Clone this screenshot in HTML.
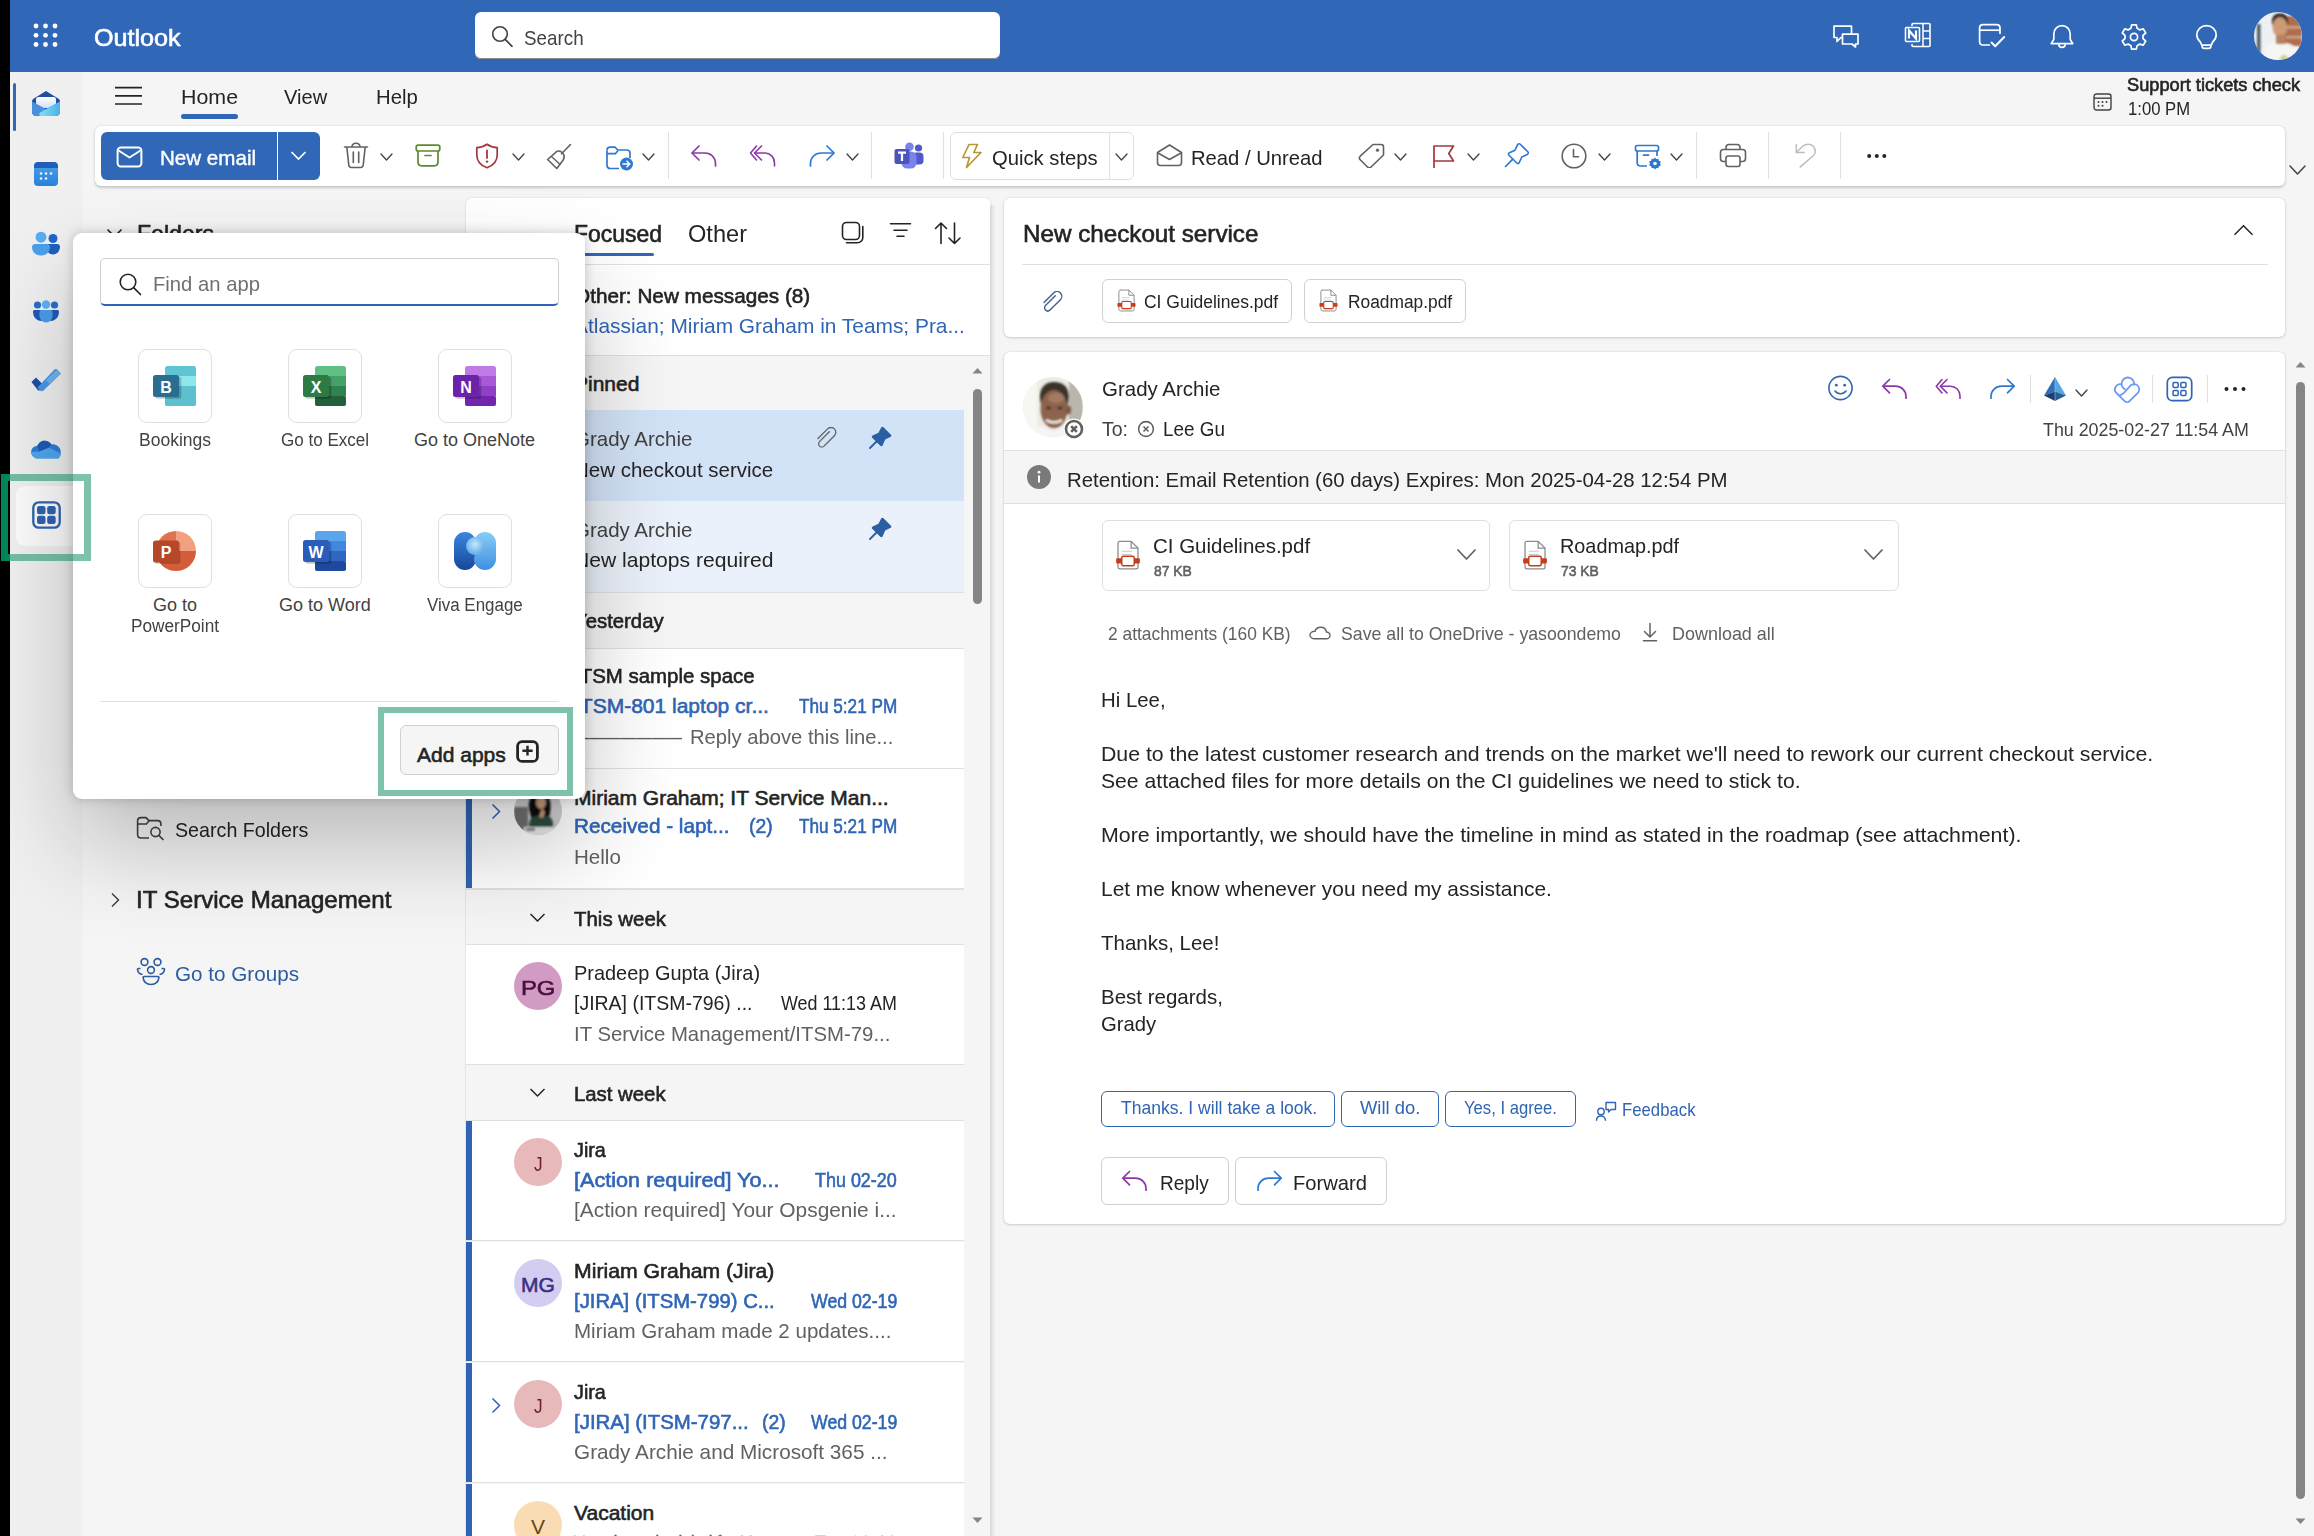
<!DOCTYPE html><html><head><meta charset="utf-8"><style>
html,body{margin:0;padding:0}
body{width:2314px;height:1536px;overflow:hidden;position:relative;background:#f5f5f5;font-family:"Liberation Sans",sans-serif}
.a{position:absolute;display:block}
.t{position:absolute;white-space:nowrap}
</style></head><body>
<div class="a" style="left:0px;top:0px;width:10px;height:1536px;background:#000"></div>
<div class="a" style="left:10px;top:0px;width:2304px;height:72px;background:#3068b7"></div>
<div class="a" style="left:10px;top:72px;width:73px;height:1464px;background:#f0f0f0"></div>
<svg class="a" style="left:0px;top:0px;" width="70" height="72" viewBox="0 0 70 72" fill="none"><circle cx="36" cy="26" r="2.4" fill="#fff"/><circle cx="36" cy="35.3" r="2.4" fill="#fff"/><circle cx="36" cy="44.5" r="2.4" fill="#fff"/><circle cx="45.5" cy="26" r="2.4" fill="#fff"/><circle cx="45.5" cy="35.3" r="2.4" fill="#fff"/><circle cx="45.5" cy="44.5" r="2.4" fill="#fff"/><circle cx="55" cy="26" r="2.4" fill="#fff"/><circle cx="55" cy="35.3" r="2.4" fill="#fff"/><circle cx="55" cy="44.5" r="2.4" fill="#fff"/></svg>
<div class="t" style="left:94.00px;top:26px;font-size:24px;line-height:24px;color:#fff;-webkit-text-stroke:0.6px #fff;transform:scaleX(1.0476);transform-origin:0 0;">Outlook</div>
<div class="a" style="left:475px;top:12px;width:525px;height:47px;background:#fff;border-radius:6px;box-shadow:inset 0 -1px 0 #8a8a8a"></div>
<svg class="a" style="left:490px;top:25px;" width="24" height="22" viewBox="0 0 24 22" fill="none"><circle cx="10" cy="9" r="7.3" stroke="#424242" stroke-width="1.6"/><path d="M15.2 14.4L22 21.3" stroke="#424242" stroke-width="1.7" stroke-linecap="round"/></svg>
<div class="t" style="left:524.00px;top:27px;font-size:21px;line-height:21px;color:#424242;transform:scaleX(0.8955);transform-origin:0 0;">Search</div>
<svg class="a" style="left:114px;top:84px;" width="29" height="24" viewBox="0 0 29 24" fill="none"><path d="M1 3.6H28M1 11.9H28M1 20H28" stroke="#242424" stroke-width="1.6"/></svg>
<div class="t" style="left:181.00px;top:86px;font-size:21px;line-height:21px;color:#242424;transform:scaleX(1.0179);transform-origin:0 0;">Home</div>
<div class="a" style="left:181px;top:114px;width:57px;height:5px;background:#3068b7;border-radius:3px"></div>
<div class="t" style="left:284.00px;top:86px;font-size:21px;line-height:21px;color:#242424;transform:scaleX(0.9565);transform-origin:0 0;">View</div>
<div class="t" style="left:376.00px;top:86px;font-size:21px;line-height:21px;color:#242424;transform:scaleX(0.9674);transform-origin:0 0;">Help</div>
<div class="t" style="left:2127.00px;top:76px;font-size:18px;line-height:18px;color:#242424;-webkit-text-stroke:0.6px #242424;transform:scaleX(1.0116);transform-origin:0 0;">Support tickets check</div>
<div class="t" style="left:2128.00px;top:100px;font-size:18px;line-height:18px;color:#242424;transform:scaleX(0.9254);transform-origin:0 0;">1:00 PM</div>
<div class="a" style="left:95px;top:126px;width:2190px;height:60px;background:#fff;border-radius:6px;box-shadow:0 1.5px 3px rgba(0,0,0,.18),0 0 2px rgba(0,0,0,.10)"></div>
<div class="a" style="left:101px;top:132px;width:219px;height:48px;background:#3068b7;border-radius:6px"></div>
<div class="a" style="left:277px;top:132px;width:1px;height:48px;background:#fff"></div>
<svg class="a" style="left:116px;top:146px;" width="27" height="22" viewBox="0 0 27 22" fill="none"><rect x="1.6" y="1.6" width="23.8" height="18.8" rx="3.2" stroke="#fff" stroke-width="2"/><path d="M2.5 4.5L13.5 11.5L24.5 4.5" stroke="#fff" stroke-width="2" stroke-linejoin="round"/></svg>
<div class="t" style="left:160.00px;top:147px;font-size:21px;line-height:21px;color:#fff;transform:scaleX(0.9796);transform-origin:0 0;-webkit-text-stroke:0.4px #fff;">New email</div>
<svg class="a" style="left:290px;top:150px;" width="17" height="11" viewBox="0 0 17 11" fill="none"><path d="M1.5 2L8.5 9L15.5 2" stroke="#fff" stroke-width="1.7"/></svg>
<svg class="a" style="left:343px;top:142px;" width="26" height="27" viewBox="0 0 26 27" fill="none"><path d="M1.5 5H24.5" stroke="#616161" stroke-width="1.6" stroke-linecap="round"/><path d="M9 5C9 2.8 10.6 1.3 13 1.3S17 2.8 17 5" stroke="#616161" stroke-width="1.6"/><path d="M3.8 5L5.8 23.2C6 24.6 7 25.5 8.4 25.5H17.6C19 25.5 20 24.6 20.2 23.2L22.2 5" stroke="#616161" stroke-width="1.6"/><path d="M10.3 10V20.5M15.7 10V20.5" stroke="#616161" stroke-width="1.6" stroke-linecap="round"/></svg>
<svg class="a" style="left:380px;top:153px;" width="13" height="8" viewBox="0 0 13 8" fill="none"><path d="M1 1L6.5 7L12 1" stroke="#424242" stroke-width="1.3" stroke-linejoin="round" stroke-linecap="round"/></svg>
<svg class="a" style="left:415px;top:144px;" width="26" height="23" viewBox="0 0 26 23" fill="none"><rect x="1.2" y="1.2" width="23.6" height="5.8" rx="2" stroke="#5c8a2a" stroke-width="1.7"/><path d="M3 7V18C3 20.2 4.6 21.8 6.8 21.8H19.2C21.4 21.8 23 20.2 23 18V7" stroke="#5c8a2a" stroke-width="1.7"/><path d="M10 11.5H16" stroke="#5c8a2a" stroke-width="1.7" stroke-linecap="round"/></svg>
<svg class="a" style="left:475px;top:143px;" width="24" height="26" viewBox="0 0 24 26" fill="none"><path d="M12 1.3C9 3.5 5.6 4.6 1.8 4.6V12C1.8 18.2 5.4 22.4 12 24.8C18.6 22.4 22.2 18.2 22.2 12V4.6C18.4 4.6 15 3.5 12 1.3Z" stroke="#a4373a" stroke-width="1.7" stroke-linejoin="round"/><path d="M12 7.5V15" stroke="#a4373a" stroke-width="1.8" stroke-linecap="round"/><circle cx="12" cy="18.6" r="1.2" fill="#a4373a"/></svg>
<svg class="a" style="left:512px;top:153px;" width="13" height="8" viewBox="0 0 13 8" fill="none"><path d="M1 1L6.5 7L12 1" stroke="#424242" stroke-width="1.3" stroke-linejoin="round" stroke-linecap="round"/></svg>
<svg class="a" style="left:546px;top:143px;" width="26" height="27" viewBox="0 0 26 27" fill="none"><path d="M15.5 10.8L24.5 1.5" stroke="#616161" stroke-width="1.6" stroke-linecap="round"/><path d="M11.2 8.2C13.5 7.6 16.2 9 17.5 11.2C18.6 13.2 18.2 15.5 17 17.3L10.8 25.5L1.6 16.5L9.2 9.8C9.8 9.1 10.5 8.5 11.2 8.2Z" stroke="#616161" stroke-width="1.6" stroke-linejoin="round"/><path d="M5.2 13.2L14.5 21.8" stroke="#616161" stroke-width="1.4"/></svg>
<svg class="a" style="left:605px;top:145px;" width="29" height="26" viewBox="0 0 29 26" fill="none"><path d="M2 5.5C2 3.6 3.4 2.2 5.3 2.2H10L12.8 5H21.7C23.6 5 25 6.4 25 8.3V13" stroke="#2f78d0" stroke-width="1.7" stroke-linejoin="round"/><path d="M2 5.5V20.2C2 22.1 3.4 23.5 5.3 23.5H14" stroke="#2f78d0" stroke-width="1.7"/><path d="M2 8.6H10.5L13 5.6" stroke="#2f78d0" stroke-width="1.6"/><circle cx="21.5" cy="19" r="6.5" fill="#2f78d0"/><path d="M18 19H24.6M22 16.2L24.8 19L22 21.8" stroke="#fff" stroke-width="1.6" stroke-linecap="round" stroke-linejoin="round"/></svg>
<svg class="a" style="left:642px;top:153px;" width="13" height="8" viewBox="0 0 13 8" fill="none"><path d="M1 1L6.5 7L12 1" stroke="#424242" stroke-width="1.3" stroke-linejoin="round" stroke-linecap="round"/></svg>
<div class="a" style="left:668px;top:132px;width:1px;height:47px;background:#e0e0e0"></div>
<svg class="a" style="left:690px;top:144px;" width="28" height="23" viewBox="0 0 28 23" fill="none"><path d="M9 2L2 9L9 16" stroke="#8b38a8" stroke-width="1.7" stroke-linecap="round" stroke-linejoin="round"/><path d="M2.5 9H15C20.8 9 25.5 13.5 25.5 19.5V22" stroke="#8b38a8" stroke-width="1.7" stroke-linecap="round"/></svg>
<svg class="a" style="left:749px;top:144px;" width="28" height="23" viewBox="0 0 28 23" fill="none"><path d="M7.5 2L1.5 9L7.5 16" stroke="#8b38a8" stroke-width="1.6" stroke-linecap="round" stroke-linejoin="round"/><path d="M12.5 2L5.5 9L12.5 16" stroke="#8b38a8" stroke-width="1.6" stroke-linecap="round" stroke-linejoin="round"/><path d="M6 9H16C21.2 9 25.5 13.3 25.5 19V22" stroke="#8b38a8" stroke-width="1.6" stroke-linecap="round"/></svg>
<svg class="a" style="left:808px;top:144px;" width="28" height="23" viewBox="0 0 28 23" fill="none"><path d="M19 2L26 9L19 16" stroke="#2f78d0" stroke-width="1.7" stroke-linecap="round" stroke-linejoin="round"/><path d="M25.5 9H13C7.2 9 2.5 13.5 2.5 19.5V22" stroke="#2f78d0" stroke-width="1.7" stroke-linecap="round"/></svg>
<svg class="a" style="left:846px;top:153px;" width="13" height="8" viewBox="0 0 13 8" fill="none"><path d="M1 1L6.5 7L12 1" stroke="#424242" stroke-width="1.3" stroke-linejoin="round" stroke-linecap="round"/></svg>
<div class="a" style="left:871px;top:132px;width:1px;height:47px;background:#e0e0e0"></div>
<svg class="a" style="left:894px;top:142px;" width="30" height="27" viewBox="0 0 30 27" fill="none"><circle cx="24.5" cy="6" r="3.6" fill="#5059c9"/><rect x="18.5" y="10.5" width="11" height="12" rx="4" fill="#5059c9"/><circle cx="15.5" cy="4.8" r="4.3" fill="#7b83eb"/><rect x="7.5" y="9.5" width="15" height="17" rx="5.5" fill="#7b83eb"/><rect x="0.5" y="7" width="15" height="15" rx="2" fill="#4b53bc"/><path d="M4 10.7H12M8 10.7V19" stroke="#fff" stroke-width="2.2"/></svg>
<div class="a" style="left:943px;top:132px;width:1px;height:47px;background:#e0e0e0"></div>
<div class="a" style="left:950px;top:132px;width:184px;height:48px;border:1px solid #e0e0e0;border-radius:6px;box-sizing:border-box"></div>
<div class="a" style="left:1109px;top:133px;width:1px;height:46px;background:#e0e0e0"></div>
<svg class="a" style="left:960px;top:143px;" width="23" height="26" viewBox="0 0 23 26" fill="none"><path d="M9 1.5H17.5L13.8 9.5H21L6.5 24.5L9.5 14.5H2.8L9 1.5Z" stroke="#b8963a" stroke-width="1.7" stroke-linejoin="round"/></svg>
<div class="t" style="left:992.00px;top:147px;font-size:21px;line-height:21px;color:#242424;transform:scaleX(0.9636);transform-origin:0 0;">Quick steps</div>
<svg class="a" style="left:1115px;top:153px;" width="13" height="8" viewBox="0 0 13 8" fill="none"><path d="M1 1L6.5 7L12 1" stroke="#424242" stroke-width="1.3" stroke-linejoin="round" stroke-linecap="round"/></svg>
<svg class="a" style="left:1156px;top:143px;" width="27" height="24" viewBox="0 0 27 24" fill="none"><path d="M1.5 9.5L13.5 2L25.5 9.5V19.5C25.5 21.2 24.2 22.5 22.5 22.5H4.5C2.8 22.5 1.5 21.2 1.5 19.5V9.5Z" stroke="#616161" stroke-width="1.6" stroke-linejoin="round"/><path d="M2 10L13.5 16.5L25 10" stroke="#616161" stroke-width="1.6" stroke-linejoin="round"/></svg>
<div class="t" style="left:1191.00px;top:147px;font-size:21px;line-height:21px;color:#242424;transform:scaleX(0.9635);transform-origin:0 0;">Read / Unread</div>
<svg class="a" style="left:1358px;top:143px;" width="27" height="25" viewBox="0 0 27 25" fill="none"><path d="M15 1.5H23.2C24.5 1.5 25.5 2.5 25.5 3.8V12L13 24C12 25 10.5 25 9.5 24L2.2 16.7C1.2 15.7 1.2 14.2 2.2 13.2Z" stroke="#616161" stroke-width="1.6" stroke-linejoin="round"/><circle cx="19.5" cy="7.2" r="1.6" fill="#616161"/></svg>
<svg class="a" style="left:1394px;top:153px;" width="13" height="8" viewBox="0 0 13 8" fill="none"><path d="M1 1L6.5 7L12 1" stroke="#424242" stroke-width="1.3" stroke-linejoin="round" stroke-linecap="round"/></svg>
<svg class="a" style="left:1432px;top:144px;" width="24" height="25" viewBox="0 0 24 25" fill="none"><path d="M2 24V2H21.5L16.8 9.5L21.5 17H2" stroke="#a4373a" stroke-width="1.7" stroke-linejoin="round"/></svg>
<svg class="a" style="left:1467px;top:153px;" width="13" height="8" viewBox="0 0 13 8" fill="none"><path d="M1 1L6.5 7L12 1" stroke="#424242" stroke-width="1.3" stroke-linejoin="round" stroke-linecap="round"/></svg>
<svg class="a" style="left:1504px;top:142px;" width="26" height="26" viewBox="0 0 26 26" fill="none"><path d="M1.5 24.5L8.8 17.2" stroke="#2f78d0" stroke-width="1.7" stroke-linecap="round"/><path d="M16.2 2.2L23.8 9.8C24.6 10.6 24.4 11.9 23.4 12.4L17.8 15L15.2 20.6C14.8 21.6 13.5 21.8 12.7 21L5 13.3C4.2 12.5 4.4 11.2 5.4 10.8L11 8.2L13.6 2.6C14.1 1.6 15.4 1.4 16.2 2.2Z" stroke="#2f78d0" stroke-width="1.6" stroke-linejoin="round"/></svg>
<svg class="a" style="left:1561px;top:143px;" width="28" height="26" viewBox="0 0 28 26" fill="none"><circle cx="13" cy="13" r="11.8" stroke="#616161" stroke-width="1.6"/><path d="M12.5 6.5V13.8H17.5" stroke="#616161" stroke-width="1.6" stroke-linecap="round" stroke-linejoin="round"/></svg>
<svg class="a" style="left:1598px;top:153px;" width="13" height="8" viewBox="0 0 13 8" fill="none"><path d="M1 1L6.5 7L12 1" stroke="#424242" stroke-width="1.3" stroke-linejoin="round" stroke-linecap="round"/></svg>
<svg class="a" style="left:1634px;top:144px;" width="29" height="26" viewBox="0 0 29 26" fill="none"><rect x="1.5" y="1.5" width="23" height="5.5" rx="2" stroke="#2f78d0" stroke-width="1.7"/><path d="M3.2 7V18.5C3.2 20.5 4.7 22 6.7 22H13" stroke="#2f78d0" stroke-width="1.7"/><path d="M23 7V12" stroke="#2f78d0" stroke-width="1.7"/><path d="M9.5 11.2H14.5" stroke="#2f78d0" stroke-width="1.7" stroke-linecap="round"/><path d="M21 13.5l1.3 1.6 2-.4.6 2 1.9.9-.7 1.9.7 1.9-1.9.9-.6 2-2-.4L21 25.5l-1.3-1.6-2 .4-.6-2-1.9-.9.7-1.9-.7-1.9 1.9-.9.6-2 2 .4Z" fill="#2f78d0"/><circle cx="21" cy="19.5" r="1.8" fill="#fff"/></svg>
<svg class="a" style="left:1670px;top:153px;" width="13" height="8" viewBox="0 0 13 8" fill="none"><path d="M1 1L6.5 7L12 1" stroke="#424242" stroke-width="1.3" stroke-linejoin="round" stroke-linecap="round"/></svg>
<div class="a" style="left:1696px;top:132px;width:1px;height:47px;background:#e0e0e0"></div>
<svg class="a" style="left:1719px;top:143px;" width="28" height="25" viewBox="0 0 28 25" fill="none"><path d="M7 6.5V4.5C7 2.8 8.3 1.5 10 1.5H18C19.7 1.5 21 2.8 21 4.5V6.5" stroke="#616161" stroke-width="1.6"/><path d="M7 18.5H4.5C2.8 18.5 1.5 17.2 1.5 15.5V9.5C1.5 7.8 2.8 6.5 4.5 6.5H23.5C25.2 6.5 26.5 7.8 26.5 9.5V15.5C26.5 17.2 25.2 18.5 23.5 18.5H21" stroke="#616161" stroke-width="1.6"/><rect x="7" y="13" width="14" height="10.5" rx="2.2" stroke="#616161" stroke-width="1.6"/></svg>
<div class="a" style="left:1768px;top:132px;width:1px;height:47px;background:#e0e0e0"></div>
<svg class="a" style="left:1794px;top:142px;" width="23" height="27" viewBox="0 0 23 27" fill="none"><path d="M2.3 2V10.4H10.8" stroke="#bdbdbd" stroke-width="1.5"/><path d="M2.8 10L9 4C12 1.5 17 1.5 19.5 4.5C22 7.5 21.8 11.5 19 14L5.7 25.4" stroke="#bdbdbd" stroke-width="1.5"/></svg>
<div class="a" style="left:1840px;top:132px;width:1px;height:47px;background:#e0e0e0"></div>
<svg class="a" style="left:1865px;top:152px;" width="24" height="8" viewBox="0 0 24 8" fill="none"><circle cx="4.2" cy="4" r="2" fill="#242424"/><circle cx="11.8" cy="4" r="2" fill="#242424"/><circle cx="19.3" cy="4" r="2" fill="#242424"/></svg>
<svg class="a" style="left:2289px;top:165px;" width="17" height="10" viewBox="0 0 17 10" fill="none"><path d="M1 1L8.5 9L16 1" stroke="#424242" stroke-width="1.5" stroke-linejoin="round" stroke-linecap="round"/></svg>
<svg class="a" style="left:2093px;top:93px;" width="19" height="18" viewBox="0 0 19 18" fill="none"><rect x="1" y="1" width="17" height="16" rx="2.5" stroke="#424242" stroke-width="1.4"/><path d="M1 5.2H18" stroke="#424242" stroke-width="1.4"/><g fill="#424242"><circle cx="5.5" cy="9" r="1"/><circle cx="9.5" cy="9" r="1"/><circle cx="13.5" cy="9" r="1"/><circle cx="5.5" cy="12.8" r="1"/><circle cx="9.5" cy="12.8" r="1"/></g></svg>
<svg class="a" style="left:1832px;top:24px;" width="28" height="24" viewBox="0 0 28 24" fill="none"><path d="M2 2.2H19.5V13.5H9L5 17.5V13.5H2Z" stroke="#fff" stroke-width="1.7" stroke-linejoin="round"/><path d="M10.5 10.2H26V20H23.5V23L20 20H10.5Z" fill="#3068b7" stroke="#fff" stroke-width="1.7" stroke-linejoin="round"/></svg>
<svg class="a" style="left:1904px;top:22px;" width="28" height="26" viewBox="0 0 28 26" fill="none"><path d="M8 4V2.5C8 1.9 8.4 1.5 9 1.5H25C25.6 1.5 26 1.9 26 2.5V23.5C26 24.1 25.6 24.5 25 24.5H9C8.4 24.5 8 24.1 8 23.5V22" stroke="#fff" stroke-width="1.6"/><path d="M19 1.5V24.5M19 9H26M19 16.5H26" stroke="#fff" stroke-width="1.5"/><rect x="1.5" y="5.5" width="14" height="14" rx="1" fill="#3068b7" stroke="#fff" stroke-width="1.6"/><path d="M5 16.5V8.5L12 16.5V8.5" stroke="#fff" stroke-width="2.2" stroke-linejoin="miter"/></svg>
<svg class="a" style="left:1978px;top:23px;" width="28" height="26" viewBox="0 0 28 26" fill="none"><path d="M12 22H5C3.1 22 1.6 20.5 1.6 18.6V5C1.6 3.1 3.1 1.6 5 1.6H18.6C20.5 1.6 22 3.1 22 5V11" stroke="#fff" stroke-width="1.7"/><path d="M1.6 7.2H22" stroke="#fff" stroke-width="1.7"/><path d="M13.5 19.5L17.2 23.2L26.2 14" stroke="#fff" stroke-width="2" stroke-linecap="round" stroke-linejoin="round"/></svg>
<svg class="a" style="left:2049px;top:24px;" width="26" height="25" viewBox="0 0 26 25" fill="none"><path d="M13 1.6C8.2 1.6 4.8 5.3 4.8 10V15.5L2.2 19.6H23.8L21.2 15.5V10C21.2 5.3 17.8 1.6 13 1.6Z" stroke="#fff" stroke-width="1.7" stroke-linejoin="round"/><path d="M9.8 20.2C9.8 22.2 11.2 23.4 13 23.4S16.2 22.2 16.2 20.2" stroke="#fff" stroke-width="1.7"/></svg>
<svg class="a" style="left:2120px;top:23px;" width="28" height="28" viewBox="0 0 28 28" fill="none"><path d="M11.6 1.8H16.4L17.1 5.3L19.9 6.9L23.3 5.8L25.7 10L23 12.4V15.6L25.7 18L23.3 22.2L19.9 21.1L17.1 22.7L16.4 26.2H11.6L10.9 22.7L8.1 21.1L4.7 22.2L2.3 18L5 15.6V12.4L2.3 10L4.7 5.8L8.1 6.9L10.9 5.3Z" stroke="#fff" stroke-width="1.7" stroke-linejoin="round"/><circle cx="14" cy="14" r="3.6" stroke="#fff" stroke-width="1.7"/></svg>
<svg class="a" style="left:2195px;top:24px;" width="23" height="26" viewBox="0 0 23 26" fill="none"><path d="M11.5 1.6C6 1.6 1.8 5.8 1.8 10.8C1.8 14 3.3 16.2 5.3 18L6.8 21.2H16.2L17.7 18C19.7 16.2 21.2 14 21.2 10.8C21.2 5.8 17 1.6 11.5 1.6Z" stroke="#fff" stroke-width="1.7" stroke-linejoin="round"/><path d="M7.2 21.2V22.5C7.2 23.6 8.1 24.4 9.2 24.4H13.8C14.9 24.4 15.8 23.6 15.8 22.5V21.2" stroke="#fff" stroke-width="1.7"/></svg>
<svg class="a" style="left:2254px;top:12px;" width="48" height="48" viewBox="0 0 48 48" fill="none"><defs><clipPath id="ca1"><circle cx="24" cy="24" r="24"/></clipPath><filter id="bl1"><feGaussianBlur stdDeviation=".8"/></filter></defs><g clip-path="url(#ca1)"><rect width="48" height="48" fill="#eef1f4"/><g filter="url(#bl1)"><rect x="30" y="4" width="18" height="30" fill="#b06c4c"/><rect x="32" y="14" width="16" height="2.5" fill="#c9a58c"/><rect x="32" y="24" width="16" height="2.5" fill="#c9a58c"/><rect x="3" y="12" width="3.5" height="36" fill="#4d5a5c"/><path d="M18 9C18 4 21 1.5 26 1.5S34 4 34 9V13H18Z" fill="#2a2220"/><ellipse cx="26" cy="15" rx="7.5" ry="10" fill="#cc9a74"/><rect x="22" y="23" width="9" height="9" fill="#b98160"/><path d="M8 48C8 38 14 32 20 31L26 34L33 31C40 33 46 38 46 48Z" fill="#f6f6f4"/><circle cx="30" cy="47" r="4" fill="#cfd28a"/></g></g></svg>
<div class="a" style="left:13px;top:83px;width:3px;height:48px;background:#3068b7;border-radius:2px"></div>
<svg class="a" style="left:31px;top:90px;" width="30" height="27" viewBox="0 0 30 27" fill="none"><defs><linearGradient id="mg1" x1="0" y1="0" x2="1" y2="0"><stop offset="0" stop-color="#7fe3f7"/><stop offset="1" stop-color="#4fb0e4"/></linearGradient><linearGradient id="mg2" x1="0" y1="0" x2="0" y2="1"><stop offset="0" stop-color="#fff"/><stop offset="1" stop-color="#cfe0f5"/></linearGradient></defs><path d="M15 1L27.5 8.7C28.4 9.3 29 10.3 29 11.4V22C29 24.2 27.2 26 25 26H5C2.8 26 1 24.2 1 22V11.4C1 10.3 1.6 9.3 2.5 8.7Z" fill="#1e4fa0"/><rect x="5" y="7" width="20" height="11" rx="2.5" fill="url(#mg2)"/><path d="M1 11.5L15 19L29 11.5V22C29 24.2 27.2 26 25 26H5C2.8 26 1 24.2 1 22Z" fill="#4a90dc"/><path d="M29 11.5V22C29 24.2 27.2 26 25 26H10C8.2 26 7.5 23.5 9.2 22.5L29 11.5Z" fill="url(#mg1)"/></svg>
<svg class="a" style="left:33px;top:161px;" width="26" height="26" viewBox="0 0 26 26" fill="none"><defs><linearGradient id="cg" x1="0" y1="0" x2="0" y2="1"><stop offset="0" stop-color="#4aa3ea"/><stop offset="1" stop-color="#2b80d8"/></linearGradient></defs><rect x="1" y="1" width="24" height="24" rx="4" fill="url(#cg)"/><path d="M1 5C1 2.8 2.8 1 5 1H21C23.2 1 25 2.8 25 5V7H1Z" fill="#1f5fb8"/><g fill="#fff" opacity=".9"><circle cx="8" cy="12.5" r="1.3"/><circle cx="13" cy="12.5" r="1.3"/><circle cx="18" cy="12.5" r="1.3"/><circle cx="8" cy="17.5" r="1.3"/><circle cx="13" cy="17.5" r="1.3"/></g></svg>
<svg class="a" style="left:31px;top:231px;" width="30" height="25" viewBox="0 0 30 25" fill="none"><circle cx="22" cy="7.5" r="4.5" fill="#2166c9"/><path d="M15 15.5C15 14 16.2 13 17.7 13H26.3C27.8 13 29 14 29 15.5C29 20.5 25.5 23.5 22 23.5S15 20.5 15 15.5Z" fill="#1f5fbf"/><circle cx="10" cy="6.2" r="5.5" fill="#56aef0"/><path d="M1 16C1 14.2 2.4 13 4.2 13H15.8C17.6 13 19 14.2 19 16C19 21.2 15 24.5 10 24.5S1 21.2 1 16Z" fill="#4ba0ea"/></svg>
<svg class="a" style="left:32px;top:300px;" width="28" height="23" viewBox="0 0 28 23" fill="none"><circle cx="5.5" cy="5" r="3.6" fill="#2a6bd0"/><circle cx="22.5" cy="5" r="3.6" fill="#2a6bd0"/><path d="M1 11.5C1 10.5 1.8 10 2.8 10H9V16C9 18 9.5 19.6 10.5 20.8C5 21.5 1 17.5 1 11.5Z" fill="#2158b8"/><path d="M27 11.5C27 10.5 26.2 10 25.2 10H19V16C19 18 18.5 19.6 17.5 20.8C23 21.5 27 17.5 27 11.5Z" fill="#2158b8"/><circle cx="14" cy="4.5" r="4.2" fill="#5bb1f2"/><path d="M7.5 12C7.5 10.9 8.4 10 9.5 10H18.5C19.6 10 20.5 10.9 20.5 12V15.5C20.5 19.5 17.6 22.5 14 22.5S7.5 19.5 7.5 15.5Z" fill="#4a9de8"/></svg>
<svg class="a" style="left:30px;top:368px;" width="32" height="24" viewBox="0 0 32 24" fill="none"><path d="M1.5 14L6 9.5L13.5 17L11 21.5C10.3 22.7 8.7 22.9 7.7 21.9Z" fill="#1f4fa8"/><path d="M27 1.5L31 5.5L13.5 22.5C12.5 23.5 10.8 23.4 9.9 22.3L7.5 19.5L24.2 1.8C25 1 26.2 0.8 27 1.5Z" fill="#4b97e6"/><path d="M27 1.5L31 5.5L20 16.2L16 12.2Z" fill="#6db6f2"/></svg>
<svg class="a" style="left:30px;top:439px;" width="32" height="22" viewBox="0 0 32 22" fill="none"><path d="M12.5 2C16 1 19.5 2.5 21.2 5.3C25.5 4.8 29.5 7.2 30.5 11C31.3 14 30.5 17 28.5 19H8C4.2 19 1.2 16.5 1.2 13C1.2 9.5 4 7 7.5 6.8C8.5 4.4 10.3 2.6 12.5 2Z" fill="#2e7cd6"/><path d="M1.2 13C1.2 16.5 4.2 19.8 8 19.8H28.5C30 18.3 30.8 16.5 30.9 14.5L19 8.5L9 12.5Z" fill="#4da7ee"/><path d="M12.5 2C16 1 19.5 2.5 21.2 5.3L19 8.5L9 12.5L7.5 6.8C8.5 4.4 10.3 2.6 12.5 2Z" fill="#1e5bb5"/></svg>
<div class="a" style="left:16px;top:486px;width:74px;height:60px;background:#fcfcfc;border-radius:9px"></div>
<svg class="a" style="left:32px;top:501px;" width="29" height="28" viewBox="0 0 29 28" fill="none"><rect x="1.3" y="1.3" width="26.4" height="25.4" rx="5.5" stroke="#2f64b0" stroke-width="2.3"/><rect x="5" y="5" width="8.5" height="8.2" rx="2.2" fill="#2f64b0"/><rect x="15.2" y="5" width="8.5" height="8.2" rx="2.2" fill="#2f64b0"/><rect x="5" y="14.8" width="8.5" height="8.2" rx="2.2" fill="#2f64b0"/><rect x="15.2" y="14.8" width="8.5" height="8.2" rx="2.2" fill="#2f64b0"/></svg>
<svg class="a" style="left:106px;top:228px;" width="17" height="10" viewBox="0 0 17 10" fill="none"><path d="M1.5 1.5L8.5 8.5L15.5 1.5" stroke="#242424" stroke-width="1.6"/></svg>
<div class="t" style="left:137.00px;top:222px;font-size:24px;line-height:24px;color:#242424;-webkit-text-stroke:0.6px #242424;transform:scaleX(0.9625);transform-origin:0 0;">Folders</div>
<svg class="a" style="left:136px;top:816px;" width="30" height="25" viewBox="0 0 30 25" fill="none"><path d="M13 22H5C3.1 22 1.6 20.5 1.6 18.6V5C1.6 3.1 3.1 1.6 5 1.6H10L13 4.6H21.5C23.4 4.6 24.9 6.1 24.9 8V10" stroke="#424242" stroke-width="1.6" stroke-linejoin="round"/><path d="M1.6 8H10.5L13 4.8" stroke="#424242" stroke-width="1.5"/><circle cx="19.5" cy="16" r="4.6" stroke="#424242" stroke-width="1.6"/><path d="M22.8 19.4L27 23.5" stroke="#424242" stroke-width="1.7" stroke-linecap="round"/></svg>
<div class="t" style="left:175.00px;top:819px;font-size:21px;line-height:21px;color:#242424;transform:scaleX(0.9366);transform-origin:0 0;">Search Folders</div>
<svg class="a" style="left:110px;top:892px;" width="11" height="16" viewBox="0 0 11 16" fill="none"><path d="M2 1.5L8.5 8L2 14.5" stroke="#424242" stroke-width="1.5"/></svg>
<div class="t" style="left:136.00px;top:888px;font-size:24px;line-height:24px;color:#242424;-webkit-text-stroke:0.6px #242424;transform:scaleX(1.0039);transform-origin:0 0;">IT Service Management</div>
<svg class="a" style="left:136px;top:957px;" width="30" height="29" viewBox="0 0 30 29" fill="none"><g stroke="#2a5ca0" stroke-width="1.6"><circle cx="8.5" cy="5" r="3.4"/><circle cx="21.5" cy="5" r="3.4"/><circle cx="15" cy="13" r="3.4"/><path d="M4.5 11.5H2.6C1.9 11.5 1.4 12 1.5 12.7C1.9 15.3 3.6 17.2 6.5 17.5"/><path d="M25.5 11.5H27.4C28.1 11.5 28.6 12 28.5 12.7C28.1 15.3 26.4 17.2 23.5 17.5"/><path d="M8.2 19.5H21.8C22.5 19.5 23 20 22.9 20.7C22.4 24.8 19.5 27.5 15 27.5S7.6 24.8 7.1 20.7C7 20 7.5 19.5 8.2 19.5Z"/></g></svg>
<div class="t" style="left:175.00px;top:963px;font-size:21px;line-height:21px;color:#2a5ca0;transform:scaleX(0.9841);transform-origin:0 0;">Go to Groups</div>
<div class="a" style="left:466px;top:198px;width:525px;height:1338px;background:#fff;border-radius:6px 6px 0 0;box-shadow:0 0 2px rgba(0,0,0,.12),0 1px 2px rgba(0,0,0,.10)"></div>
<div class="t" style="left:574.00px;top:222px;font-size:24px;line-height:24px;color:#242424;-webkit-text-stroke:0.6px #242424;transform:scaleX(0.9565);transform-origin:0 0;">Focused</div>
<div class="a" style="left:574px;top:253px;width:80px;height:3px;background:#3068b7;border-radius:2px"></div>
<div class="t" style="left:688.00px;top:222px;font-size:24px;line-height:24px;color:#242424;transform:scaleX(0.9833);transform-origin:0 0;">Other</div>
<svg class="a" style="left:841px;top:221px;" width="24" height="23" viewBox="0 0 24 23" fill="none"><rect x="1.5" y="1.5" width="17" height="17" rx="4" stroke="#242424" stroke-width="1.6"/><path d="M21.8 5.5V16.5C21.8 19.4 19.4 21.8 16.5 21.8H5.5" stroke="#242424" stroke-width="1.6" stroke-linecap="round"/></svg>
<svg class="a" style="left:889px;top:222px;" width="23" height="16" viewBox="0 0 23 16" fill="none"><path d="M1.5 1.8H21.5M5 8.2H18M8 14.2H15" stroke="#242424" stroke-width="1.6" stroke-linecap="round"/></svg>
<svg class="a" style="left:934px;top:221px;" width="29" height="24" viewBox="0 0 29 24" fill="none"><path d="M7 22.5V2M1.5 7.5L7 2L12.5 7.5M20.5 2V22.5M15 17L20.5 22.5L26 17" stroke="#242424" stroke-width="1.6" stroke-linecap="round" stroke-linejoin="round"/></svg>
<div class="a" style="left:466px;top:264px;width:525px;height:1px;background:#e0e0e0"></div>
<div class="t" style="left:574.00px;top:285px;font-size:21px;line-height:21px;color:#242424;-webkit-text-stroke:0.6px #242424;transform:scaleX(0.9874);transform-origin:0 0;">Other: New messages (8)</div>
<div class="t" style="left:574.00px;top:315px;font-size:21px;line-height:21px;color:#2f65b5;transform:scaleX(0.9949);transform-origin:0 0;">Atlassian; Miriam Graham in Teams; Pra...</div>
<div class="a" style="left:466px;top:355px;width:525px;height:1px;background:#e0e0e0"></div>
<div class="a" style="left:466px;top:356px;width:524px;height:1180px;background:#f5f5f5"></div>
<div class="a" style="left:990px;top:205px;width:6px;height:1331px;background:linear-gradient(90deg,#d6d6d6,#e6e6e6 40%,rgba(240,240,240,0))"></div>
<div class="t" style="left:574.00px;top:373px;font-size:21px;line-height:21px;color:#242424;-webkit-text-stroke:0.6px #242424;transform:scaleX(1.0000);transform-origin:0 0;">Pinned</div>
<div class="a" style="left:466px;top:410px;width:498px;height:91px;background:#d3e3f7"></div>
<div class="t" style="left:574.00px;top:428px;font-size:21px;line-height:21px;color:#424242;transform:scaleX(0.9752);transform-origin:0 0;">Grady Archie</div>
<div class="t" style="left:574.00px;top:459px;font-size:21px;line-height:21px;color:#242424;transform:scaleX(0.9755);transform-origin:0 0;">New checkout service</div>
<svg class="a" style="left:817px;top:427px;" width="21" height="23" viewBox="0 0 21 23" fill="none"><path d="M1 11.5L10.6 1.9A4.8 4.8 0 0 1 17.4 8.7L7 19.1A3.18 3.18 0 0 1 2.5 14.6L12.3 4.8" stroke="#616161" stroke-width="1.3" stroke-linecap="round" stroke-linejoin="round"/></svg>
<svg class="a" style="left:869px;top:426px;" width="24" height="23" viewBox="0 0 24 23" fill="none"><path d="M1 22L7.5 15.5" stroke="#2c5ea3" stroke-width="1.8" stroke-linecap="round"/><path d="M14.5 1.2L22 8.7C22.6 9.3 22.5 10.3 21.7 10.7L16.2 13.5L13.6 19.4C13.2 20.3 12 20.5 11.3 19.8L3.2 11.7C2.5 11 2.7 9.8 3.6 9.4L9.5 6.8L12.3 1.3C12.7 0.5 13.9 0.5 14.5 1.2Z" fill="#2c5ea3"/></svg>
<div class="a" style="left:466px;top:501px;width:498px;height:91px;background:#ebf1fa"></div>
<div class="t" style="left:574.00px;top:519px;font-size:21px;line-height:21px;color:#424242;transform:scaleX(0.9752);transform-origin:0 0;">Grady Archie</div>
<div class="t" style="left:574.00px;top:549px;font-size:21px;line-height:21px;color:#242424;transform:scaleX(1.0051);transform-origin:0 0;">New laptops required</div>
<svg class="a" style="left:869px;top:517px;" width="24" height="23" viewBox="0 0 24 23" fill="none"><path d="M1 22L7.5 15.5" stroke="#2c5ea3" stroke-width="1.8" stroke-linecap="round"/><path d="M14.5 1.2L22 8.7C22.6 9.3 22.5 10.3 21.7 10.7L16.2 13.5L13.6 19.4C13.2 20.3 12 20.5 11.3 19.8L3.2 11.7C2.5 11 2.7 9.8 3.6 9.4L9.5 6.8L12.3 1.3C12.7 0.5 13.9 0.5 14.5 1.2Z" fill="#2c5ea3"/></svg>
<div class="a" style="left:466px;top:592px;width:498px;height:1px;background:#e0e0e0"></div>
<div class="t" style="left:574.00px;top:610px;font-size:21px;line-height:21px;color:#242424;-webkit-text-stroke:0.6px #242424;transform:scaleX(0.9677);transform-origin:0 0;">Yesterday</div>
<div class="a" style="left:466px;top:648px;width:498px;height:1px;background:#e0e0e0"></div>
<div class="a" style="left:466px;top:649px;width:498px;height:120px;background:#fff"></div>
<div class="a" style="left:466px;top:768px;width:498px;height:1px;background:#e0e0e0"></div>
<div class="a" style="left:466px;top:649px;width:6px;height:119px;background:#2f64b4"></div>
<div class="t" style="left:574.00px;top:665px;font-size:21px;line-height:21px;color:#242424;-webkit-text-stroke:0.6px #242424;transform:scaleX(0.9731);transform-origin:0 0;">ITSM sample space</div>
<div class="t" style="left:574.00px;top:695px;font-size:21px;line-height:21px;color:#2f65b5;-webkit-text-stroke:0.6px #2f65b5;transform:scaleX(1.0000);transform-origin:0 0;">ITSM-801 laptop cr...</div>
<div class="t" style="left:799.00px;top:695px;font-size:21px;line-height:21px;color:#2f65b5;-webkit-text-stroke:0.6px #2f65b5;transform:scaleX(0.8167);transform-origin:0 0;">Thu 5:21 PM</div>
<div class="t" style="left:574.00px;top:726px;font-size:21px;line-height:21px;color:#616161;transform:scaleX(0.7347);transform-origin:0 0;">———————</div>
<div class="t" style="left:690.00px;top:726px;font-size:21px;line-height:21px;color:#616161;transform:scaleX(0.9621);transform-origin:0 0;">Reply above this line...</div>
<div class="a" style="left:466px;top:769px;width:498px;height:120px;background:#fff"></div>
<div class="a" style="left:466px;top:888px;width:498px;height:1px;background:#e0e0e0"></div>
<div class="a" style="left:466px;top:769px;width:6px;height:119px;background:#2f64b4"></div>
<svg class="a" style="left:490px;top:803px;" width="12" height="17" viewBox="0 0 12 17" fill="none"><path d="M2.5 1.5L9.5 8.5L2.5 15.5" stroke="#2f65b5" stroke-width="1.5"/></svg>
<div class="t" style="left:574.00px;top:787px;font-size:21px;line-height:21px;color:#242424;-webkit-text-stroke:0.6px #242424;transform:scaleX(1.0000);transform-origin:0 0;">Miriam Graham; IT Service Man...</div>
<div class="t" style="left:574.00px;top:815px;font-size:21px;line-height:21px;color:#2f65b5;-webkit-text-stroke:0.6px #2f65b5;transform:scaleX(0.9873);transform-origin:0 0;">Received - lapt...</div>
<div class="t" style="left:749.00px;top:815px;font-size:21px;line-height:21px;color:#2f65b5;-webkit-text-stroke:0.6px #2f65b5;transform:scaleX(0.9231);transform-origin:0 0;">(2)</div>
<div class="t" style="left:799.00px;top:815px;font-size:21px;line-height:21px;color:#2f65b5;-webkit-text-stroke:0.6px #2f65b5;transform:scaleX(0.8167);transform-origin:0 0;">Thu 5:21 PM</div>
<div class="t" style="left:574.00px;top:846px;font-size:21px;line-height:21px;color:#616161;transform:scaleX(0.9792);transform-origin:0 0;">Hello</div>
<svg class="a" style="left:514px;top:787px;" width="48" height="48" viewBox="0 0 48 48" fill="none"><defs><clipPath id="ca3"><circle cx="24" cy="24" r="24"/></clipPath><filter id="bl3"><feGaussianBlur stdDeviation=".9"/></filter></defs><g clip-path="url(#ca3)"><rect width="48" height="48" fill="#cfcfd1"/><g filter="url(#bl3)"><rect x="0" y="20" width="14" height="24" fill="#6f6f71"/><path d="M16 26C13 16 16 5 26 5C35 5 38 15 36 26L34 34H18Z" fill="#111"/><ellipse cx="27" cy="15.5" rx="5" ry="6.5" fill="#c79b7b"/><path d="M15 38C15 32 19 29 23 29H32C36 29 39 32 39 38V44H15Z" fill="#2d4b40"/><path d="M28 21L31 25L29 31L25 30Z" fill="#c79b7b"/><rect x="10" y="40" width="30" height="8" fill="#eaeaea"/><rect x="12" y="41" width="9" height="3" fill="#7a7a7a"/></g></g></svg>
<div class="a" style="left:466px;top:889px;width:498px;height:1px;background:#e0e0e0"></div>
<svg class="a" style="left:529px;top:912px;" width="17" height="12" viewBox="0 0 17 12" fill="none"><path d="M1.5 2L8.5 9L15.5 2" stroke="#242424" stroke-width="1.5"/></svg>
<div class="t" style="left:574.00px;top:908px;font-size:21px;line-height:21px;color:#242424;-webkit-text-stroke:0.6px #242424;transform:scaleX(0.9737);transform-origin:0 0;">This week</div>
<div class="a" style="left:466px;top:944px;width:498px;height:1px;background:#e0e0e0"></div>
<div class="a" style="left:466px;top:945px;width:498px;height:120px;background:#fff"></div>
<div class="a" style="left:466px;top:1064px;width:498px;height:1px;background:#e0e0e0"></div>
<div class="a" style="left:514px;top:962px;width:48px;height:48px;background:#d19bc4;border-radius:50%"></div>
<div class="t" style="left:521.00px;top:977px;font-size:21px;line-height:21px;color:#4a1140;-webkit-text-stroke:0.6px #4a1140;transform:scaleX(1.1333);transform-origin:0 0;">PG</div>
<div class="t" style="left:574.00px;top:962px;font-size:21px;line-height:21px;color:#242424;transform:scaleX(0.9490);transform-origin:0 0;">Pradeep Gupta (Jira)</div>
<div class="t" style="left:574.00px;top:992px;font-size:21px;line-height:21px;color:#242424;transform:scaleX(0.9271);transform-origin:0 0;">[JIRA] (ITSM-796) ...</div>
<div class="t" style="left:781.00px;top:992px;font-size:21px;line-height:21px;color:#242424;transform:scaleX(0.8529);transform-origin:0 0;">Wed 11:13 AM</div>
<div class="t" style="left:574.00px;top:1023px;font-size:21px;line-height:21px;color:#616161;transform:scaleX(0.9693);transform-origin:0 0;">IT Service Management/ITSM-79...</div>
<svg class="a" style="left:529px;top:1087px;" width="17" height="12" viewBox="0 0 17 12" fill="none"><path d="M1.5 2L8.5 9L15.5 2" stroke="#242424" stroke-width="1.5"/></svg>
<div class="t" style="left:574.00px;top:1083px;font-size:21px;line-height:21px;color:#242424;-webkit-text-stroke:0.6px #242424;transform:scaleX(0.9684);transform-origin:0 0;">Last week</div>
<div class="a" style="left:466px;top:1120px;width:498px;height:1px;background:#e0e0e0"></div>
<div class="a" style="left:466px;top:1121px;width:498px;height:120px;background:#fff"></div>
<div class="a" style="left:466px;top:1240px;width:498px;height:1px;background:#e0e0e0"></div>
<div class="a" style="left:466px;top:1121px;width:6px;height:119px;background:#2f64b4"></div>
<div class="a" style="left:514px;top:1138px;width:48px;height:48px;background:#e8b9ba;border-radius:50%"></div>
<div class="t" style="left:533.50px;top:1153px;font-size:21px;line-height:21px;color:#6b1f23;transform:scaleX(0.8182);transform-origin:0 0;">J</div>
<div class="t" style="left:574.00px;top:1139px;font-size:21px;line-height:21px;color:#242424;-webkit-text-stroke:0.6px #242424;transform:scaleX(0.9412);transform-origin:0 0;">Jira</div>
<div class="t" style="left:574.00px;top:1169px;font-size:21px;line-height:21px;color:#2f65b5;-webkit-text-stroke:0.6px #2f65b5;transform:scaleX(1.0300);transform-origin:0 0;">[Action required] Yo...</div>
<div class="t" style="left:815.00px;top:1169px;font-size:21px;line-height:21px;color:#2f65b5;-webkit-text-stroke:0.6px #2f65b5;transform:scaleX(0.8542);transform-origin:0 0;">Thu 02-20</div>
<div class="t" style="left:574.00px;top:1199px;font-size:21px;line-height:21px;color:#616161;transform:scaleX(0.9938);transform-origin:0 0;">[Action required] Your Opsgenie i...</div>
<div class="a" style="left:466px;top:1242px;width:498px;height:120px;background:#fff"></div>
<div class="a" style="left:466px;top:1361px;width:498px;height:1px;background:#e0e0e0"></div>
<div class="a" style="left:466px;top:1242px;width:6px;height:119px;background:#2f64b4"></div>
<div class="a" style="left:514px;top:1259px;width:48px;height:48px;background:#d4cdf2;border-radius:50%"></div>
<div class="t" style="left:521.00px;top:1274px;font-size:21px;line-height:21px;color:#3b3182;-webkit-text-stroke:0.6px #3b3182;transform:scaleX(1.0000);transform-origin:0 0;">MG</div>
<div class="t" style="left:574.00px;top:1260px;font-size:21px;line-height:21px;color:#242424;-webkit-text-stroke:0.6px #242424;transform:scaleX(1.0101);transform-origin:0 0;">Miriam Graham (Jira)</div>
<div class="t" style="left:574.00px;top:1290px;font-size:21px;line-height:21px;color:#2f65b5;-webkit-text-stroke:0.6px #2f65b5;transform:scaleX(0.9663);transform-origin:0 0;">[JIRA] (ITSM-799) C...</div>
<div class="t" style="left:811.00px;top:1290px;font-size:21px;line-height:21px;color:#2f65b5;-webkit-text-stroke:0.6px #2f65b5;transform:scaleX(0.8431);transform-origin:0 0;">Wed 02-19</div>
<div class="t" style="left:574.00px;top:1320px;font-size:21px;line-height:21px;color:#616161;transform:scaleX(0.9784);transform-origin:0 0;">Miriam Graham made 2 updates....</div>
<div class="a" style="left:466px;top:1363px;width:498px;height:120px;background:#fff"></div>
<div class="a" style="left:466px;top:1482px;width:498px;height:1px;background:#e0e0e0"></div>
<div class="a" style="left:466px;top:1363px;width:6px;height:119px;background:#2f64b4"></div>
<svg class="a" style="left:490px;top:1397px;" width="12" height="17" viewBox="0 0 12 17" fill="none"><path d="M2.5 1.5L9.5 8.5L2.5 15.5" stroke="#2f65b5" stroke-width="1.5"/></svg>
<div class="a" style="left:514px;top:1380px;width:48px;height:48px;background:#e8b9ba;border-radius:50%"></div>
<div class="t" style="left:533.50px;top:1395px;font-size:21px;line-height:21px;color:#6b1f23;transform:scaleX(0.8182);transform-origin:0 0;">J</div>
<div class="t" style="left:574.00px;top:1381px;font-size:21px;line-height:21px;color:#242424;-webkit-text-stroke:0.6px #242424;transform:scaleX(0.9412);transform-origin:0 0;">Jira</div>
<div class="t" style="left:574.00px;top:1411px;font-size:21px;line-height:21px;color:#2f65b5;-webkit-text-stroke:0.6px #2f65b5;transform:scaleX(0.9722);transform-origin:0 0;">[JIRA] (ITSM-797...</div>
<div class="t" style="left:762.00px;top:1411px;font-size:21px;line-height:21px;color:#2f65b5;-webkit-text-stroke:0.6px #2f65b5;transform:scaleX(0.9231);transform-origin:0 0;">(2)</div>
<div class="t" style="left:811.00px;top:1411px;font-size:21px;line-height:21px;color:#2f65b5;-webkit-text-stroke:0.6px #2f65b5;transform:scaleX(0.8431);transform-origin:0 0;">Wed 02-19</div>
<div class="t" style="left:574.00px;top:1441px;font-size:21px;line-height:21px;color:#616161;transform:scaleX(0.9874);transform-origin:0 0;">Grady Archie and Microsoft 365 ...</div>
<div class="a" style="left:466px;top:1484px;width:498px;height:120px;background:#fff"></div>
<div class="a" style="left:466px;top:1603px;width:498px;height:1px;background:#e0e0e0"></div>
<div class="a" style="left:466px;top:1484px;width:6px;height:119px;background:#2f64b4"></div>
<div class="a" style="left:514px;top:1501px;width:48px;height:48px;background:#fadcb4;border-radius:50%"></div>
<div class="t" style="left:531.00px;top:1516px;font-size:21px;line-height:21px;color:#6a4716;transform:scaleX(1.0000);transform-origin:0 0;">V</div>
<div class="t" style="left:574.00px;top:1502px;font-size:21px;line-height:21px;color:#242424;-webkit-text-stroke:0.6px #242424;transform:scaleX(1.0000);transform-origin:0 0;">Vacation</div>
<div class="t" style="left:574.00px;top:1532px;font-size:21px;line-height:21px;color:#2f65b5;-webkit-text-stroke:0.6px #2f65b5;transform:scaleX(0.7609);transform-origin:0 0;">Vacation scheduled for Mon...</div>
<div class="t" style="left:815.00px;top:1532px;font-size:21px;line-height:21px;color:#2f65b5;-webkit-text-stroke:0.6px #2f65b5;transform:scaleX(0.8632);transform-origin:0 0;">Tue 02-18</div>
<svg class="a" style="left:972px;top:367px;" width="11" height="7" viewBox="0 0 11 7" fill="none"><path d="M0.5 6.5L5.5 1L10.5 6.5Z" fill="#858585"/></svg>
<div class="a" style="left:973px;top:389px;width:9px;height:215px;background:#858585;border-radius:5px"></div>
<svg class="a" style="left:972px;top:1517px;" width="11" height="7" viewBox="0 0 11 7" fill="none"><path d="M0.5 0.5L5.5 6L10.5 0.5Z" fill="#858585"/></svg>
<div class="a" style="left:1004px;top:198px;width:1281px;height:139px;background:#fff;border-radius:6px;box-shadow:0 0 2px rgba(0,0,0,.12),0 1px 3px rgba(0,0,0,.14)"></div>
<div class="t" style="left:1023.00px;top:222px;font-size:24px;line-height:24px;color:#242424;-webkit-text-stroke:0.6px #242424;transform:scaleX(1.0086);transform-origin:0 0;">New checkout service</div>
<svg class="a" style="left:2233px;top:223px;" width="21" height="14" viewBox="0 0 21 14" fill="none"><path d="M1.5 11.8L10.5 2.8L19.5 11.8" stroke="#242424" stroke-width="1.5"/></svg>
<div class="a" style="left:1022px;top:264px;width:1246px;height:1px;background:#e0e0e0"></div>
<svg class="a" style="left:1043px;top:291px;" width="21" height="23" viewBox="0 0 21 23" fill="none"><path d="M1 11.5L10.6 1.9A4.8 4.8 0 0 1 17.4 8.7L7 19.1A3.18 3.18 0 0 1 2.5 14.6L12.3 4.8" stroke="#3f5f8f" stroke-width="1.4" stroke-linecap="round" stroke-linejoin="round"/></svg>
<div class="a" style="left:1102px;top:279px;width:190px;height:44px;border:1px solid #d1d1d1;border-radius:6px;box-sizing:border-box;background:#fff"></div>
<svg class="a" style="left:1117px;top:289px;" width="19" height="23" viewBox="0 0 20 24" fill="none"><path d="M3 1H12.5L18 6.5V21.5C18 22.3 17.3 23 16.5 23H3.5C2.7 23 2 22.3 2 21.5V2.5C2 1.7 2.7 1 3.5 1Z" fill="#fff" stroke="#8a8a8a" stroke-width="1"/><path d="M12.5 1V6.5H18" stroke="#8a8a8a" stroke-width="1"/><path d="M5 9H13M5 11.5H13" stroke="#c8c8c8" stroke-width=".8"/><rect x="0.5" y="14.5" width="19" height="4.2" rx="1" fill="#c43e1c"/><rect x="5" y="13" width="10" height="7.5" rx="1.2" fill="#fff" stroke="#c43e1c" stroke-width="1.2"/></svg>
<div class="t" style="left:1144.00px;top:293px;font-size:18px;line-height:18px;color:#242424;transform:scaleX(0.9712);transform-origin:0 0;">CI Guidelines.pdf</div>
<div class="a" style="left:1304px;top:279px;width:162px;height:44px;border:1px solid #d1d1d1;border-radius:6px;box-sizing:border-box;background:#fff"></div>
<svg class="a" style="left:1319px;top:289px;" width="19" height="23" viewBox="0 0 20 24" fill="none"><path d="M3 1H12.5L18 6.5V21.5C18 22.3 17.3 23 16.5 23H3.5C2.7 23 2 22.3 2 21.5V2.5C2 1.7 2.7 1 3.5 1Z" fill="#fff" stroke="#8a8a8a" stroke-width="1"/><path d="M12.5 1V6.5H18" stroke="#8a8a8a" stroke-width="1"/><path d="M5 9H13M5 11.5H13" stroke="#c8c8c8" stroke-width=".8"/><rect x="0.5" y="14.5" width="19" height="4.2" rx="1" fill="#c43e1c"/><rect x="5" y="13" width="10" height="7.5" rx="1.2" fill="#fff" stroke="#c43e1c" stroke-width="1.2"/></svg>
<div class="t" style="left:1348.00px;top:293px;font-size:18px;line-height:18px;color:#242424;transform:scaleX(0.9633);transform-origin:0 0;">Roadmap.pdf</div>
<div class="a" style="left:1004px;top:352px;width:1281px;height:872px;background:#fff;border-radius:6px;box-shadow:0 0 2px rgba(0,0,0,.12),0 1px 3px rgba(0,0,0,.14)"></div>
<svg class="a" style="left:1023px;top:377px;" width="60" height="60" viewBox="0 0 60 60" fill="none"><defs><clipPath id="ca2"><circle cx="30" cy="30" r="30"/></clipPath><filter id="bl2"><feGaussianBlur stdDeviation="1"/></filter></defs><g clip-path="url(#ca2)"><rect width="60" height="60" fill="#ecebe6"/><g filter="url(#bl2)"><rect x="0" y="0" width="14" height="60" fill="#f7f7f2"/><rect x="46" y="0" width="14" height="60" fill="#b9b6ae"/><path d="M17 22C16 11 22 5 31 5S46 10 46 20L45 28H18Z" fill="#3a302b"/><ellipse cx="31" cy="32" rx="13.5" ry="19" fill="#8c634b"/><ellipse cx="33" cy="21" rx="8" ry="5" fill="#a47a62"/><ellipse cx="45.5" cy="33" rx="2.8" ry="4.5" fill="#7d5844"/><path d="M23 43Q31 48 39 43" stroke="#f4f1ec" stroke-width="2.6" fill="none"/><ellipse cx="25.5" cy="31" rx="2.6" ry="1.2" fill="#2e221c"/><ellipse cx="37" cy="31" rx="2.6" ry="1.2" fill="#2e221c"/><path d="M4 60C7 53 13 50 19 49L30 55L42 49C48 51 54 55 57 60Z" fill="#f6f5f2"/></g></g></svg>
<svg class="a" style="left:1063px;top:418px;" width="22" height="22" viewBox="0 0 22 22" fill="none"><circle cx="11" cy="11" r="10.5" fill="#fff"/><circle cx="11" cy="11" r="8" stroke="#616161" stroke-width="2.6"/><path d="M8.2 8.2L13.8 13.8M13.8 8.2L8.2 13.8" stroke="#616161" stroke-width="2.6"/></svg>
<div class="t" style="left:1102.00px;top:378px;font-size:21px;line-height:21px;color:#242424;transform:scaleX(0.9752);transform-origin:0 0;">Grady Archie</div>
<div class="t" style="left:1102.00px;top:418px;font-size:21px;line-height:21px;color:#424242;transform:scaleX(0.9286);transform-origin:0 0;">To:</div>
<svg class="a" style="left:1137px;top:420px;" width="18" height="18" viewBox="0 0 20 20" fill="none"><circle cx="10" cy="10" r="8.2" stroke="#616161" stroke-width="1.7"/><path d="M7.2 7.2L12.8 12.8M12.8 7.2L7.2 12.8" stroke="#616161" stroke-width="1.7"/></svg>
<div class="t" style="left:1163.00px;top:418px;font-size:21px;line-height:21px;color:#242424;transform:scaleX(0.8986);transform-origin:0 0;">Lee Gu</div>
<svg class="a" style="left:1827px;top:375px;" width="27" height="26" viewBox="0 0 27 26" fill="none"><circle cx="13.5" cy="13" r="11.6" stroke="#2f65b5" stroke-width="1.6"/><circle cx="9.3" cy="10.2" r="1.4" fill="#2f65b5"/><circle cx="17.7" cy="10.2" r="1.4" fill="#2f65b5"/><path d="M8 16C9.3 17.8 11.2 18.7 13.5 18.7S17.7 17.8 19 16" stroke="#2f65b5" stroke-width="1.6" stroke-linecap="round"/></svg>
<svg class="a" style="left:1881px;top:378px;" width="27" height="21" viewBox="0 0 27 21" fill="none"><path d="M8.5 1.5L1.8 8.2L8.5 14.9" stroke="#8b38a8" stroke-width="1.7" stroke-linecap="round" stroke-linejoin="round"/><path d="M2.3 8.2H14.5C20.3 8.2 25 12.7 25 18.5V20.5" stroke="#8b38a8" stroke-width="1.7" stroke-linecap="round"/></svg>
<svg class="a" style="left:1935px;top:378px;" width="27" height="21" viewBox="0 0 27 21" fill="none"><path d="M7 1.5L1.3 8.2L7 14.9" stroke="#8b38a8" stroke-width="1.6" stroke-linecap="round" stroke-linejoin="round"/><path d="M12 1.5L5.3 8.2L12 14.9" stroke="#8b38a8" stroke-width="1.6" stroke-linecap="round" stroke-linejoin="round"/><path d="M5.8 8.2H15.5C20.7 8.2 25 12.5 25 18V20.5" stroke="#8b38a8" stroke-width="1.6" stroke-linecap="round"/></svg>
<svg class="a" style="left:1989px;top:378px;" width="27" height="21" viewBox="0 0 27 21" fill="none"><path d="M18.5 1.5L25.2 8.2L18.5 14.9" stroke="#2f78d0" stroke-width="1.7" stroke-linecap="round" stroke-linejoin="round"/><path d="M24.7 8.2H12.5C6.7 8.2 2 12.7 2 18.5V20.5" stroke="#2f78d0" stroke-width="1.7" stroke-linecap="round"/></svg>
<div class="a" style="left:2030px;top:375px;width:1px;height:28px;background:#e0e0e0"></div>
<svg class="a" style="left:2043px;top:376px;" width="24" height="26" viewBox="0 0 24 26" fill="none"><path d="M12 1L1 19.5L12 15.5Z" fill="#2f6fb8"/><path d="M12 1L23 19.5L12 15.5Z" fill="#54a6e6"/><path d="M1 19.5L12 25L12 15.5Z" fill="#1d3f6e"/><path d="M23 19.5L12 25L12 15.5Z" fill="#2c5a92"/><path d="M12 1V25" stroke="#9cc9ee" stroke-width=".6"/></svg>
<svg class="a" style="left:2075px;top:389px;" width="13" height="8" viewBox="0 0 13 8" fill="none"><path d="M1 1L6.5 7L12 1" stroke="#424242" stroke-width="1.4" stroke-linejoin="round" stroke-linecap="round"/></svg>
<svg class="a" style="left:2113px;top:375px;" width="28" height="28" viewBox="0 0 28 28" fill="none"><g stroke="#6b9af2" stroke-width="1.8" fill="none" stroke-linejoin="round"><path d="M20.9 10.6A6.3 6.3 0 1 0 12.6 14.7"/><path d="M8.6 9.4A5.2 5.2 0 0 0 3.4 18L11.7 26.2A3.4 3.4 0 0 0 16.5 26.2L24.6 18.1A5.2 5.2 0 0 0 17.5 10.5L11 17.8C9.6 19.5 8 20.2 6.4 20.4"/></g></svg>
<div class="a" style="left:2152px;top:375px;width:1px;height:28px;background:#e0e0e0"></div>
<svg class="a" style="left:2166px;top:376px;" width="27" height="26" viewBox="0 0 27 26" fill="none"><rect x="1.3" y="1.3" width="24.4" height="23.4" rx="5" stroke="#2f65b5" stroke-width="1.7"/><rect x="7" y="6.5" width="5.2" height="5" rx="1.2" stroke="#2f65b5" stroke-width="1.5"/><rect x="14.8" y="6.5" width="5.2" height="5" rx="1.2" stroke="#2f65b5" stroke-width="1.5"/><rect x="7" y="14.5" width="5.2" height="5" rx="1.2" stroke="#2f65b5" stroke-width="1.5"/><rect x="14.8" y="14.5" width="5.2" height="5" rx="1.2" stroke="#2f65b5" stroke-width="1.5"/></svg>
<div class="a" style="left:2207px;top:375px;width:1px;height:28px;background:#e0e0e0"></div>
<svg class="a" style="left:2224px;top:385px;" width="22" height="8" viewBox="0 0 22 8" fill="none"><circle cx="2.5" cy="4" r="2" fill="#242424"/><circle cx="11" cy="4" r="2" fill="#242424"/><circle cx="19.5" cy="4" r="2" fill="#242424"/></svg>
<div class="t" style="left:2043.00px;top:421px;font-size:18px;line-height:18px;color:#424242;transform:scaleX(0.9904);transform-origin:0 0;">Thu 2025-02-27 11:54 AM</div>
<div class="a" style="left:1004px;top:450px;width:1281px;height:1px;background:#e0e0e0"></div>
<div class="a" style="left:1004px;top:451px;width:1281px;height:52px;background:#f5f5f5"></div>
<div class="a" style="left:1004px;top:503px;width:1281px;height:1px;background:#e0e0e0"></div>
<svg class="a" style="left:1027px;top:465px;" width="24" height="24" viewBox="0 0 24 24" fill="none"><circle cx="12" cy="12" r="12" fill="#7a7a7a"/><circle cx="12" cy="7.2" r="1.4" fill="#fff"/><path d="M12 10.5V17.5" stroke="#fff" stroke-width="2"/></svg>
<div class="t" style="left:1067.00px;top:469px;font-size:21px;line-height:21px;color:#242424;transform:scaleX(0.9706);transform-origin:0 0;">Retention: Email Retention (60 days) Expires: Mon 2025-04-28 12:54 PM</div>
<div class="a" style="left:1102px;top:520px;width:388px;height:71px;border:1px solid #e0e0e0;border-radius:6px;box-sizing:border-box;background:#fff"></div>
<svg class="a" style="left:1115px;top:540px;" width="26" height="30" viewBox="0 0 20 24" fill="none"><path d="M3 1H12.5L18 6.5V21.5C18 22.3 17.3 23 16.5 23H3.5C2.7 23 2 22.3 2 21.5V2.5C2 1.7 2.7 1 3.5 1Z" fill="#fff" stroke="#8a8a8a" stroke-width="1"/><path d="M12.5 1V6.5H18" stroke="#8a8a8a" stroke-width="1"/><path d="M5 9H13M5 11.5H13" stroke="#c8c8c8" stroke-width=".8"/><rect x="0.5" y="14.5" width="19" height="4.2" rx="1" fill="#c43e1c"/><rect x="5" y="13" width="10" height="7.5" rx="1.2" fill="#fff" stroke="#c43e1c" stroke-width="1.2"/></svg>
<div class="t" style="left:1153.00px;top:535px;font-size:21px;line-height:21px;color:#242424;transform:scaleX(0.9752);transform-origin:0 0;">CI Guidelines.pdf</div>
<div class="t" style="left:1154.00px;top:563px;font-size:15px;line-height:15px;color:#616161;-webkit-text-stroke:0.6px #616161;transform:scaleX(0.9268);transform-origin:0 0;">87 KB</div>
<svg class="a" style="left:1457px;top:549px;" width="19" height="11" viewBox="0 0 19 11" fill="none"><path d="M1 1L9.5 10L18 1" stroke="#616161" stroke-width="1.7" stroke-linejoin="round" stroke-linecap="round"/></svg>
<div class="a" style="left:1509px;top:520px;width:390px;height:71px;border:1px solid #e0e0e0;border-radius:6px;box-sizing:border-box;background:#fff"></div>
<svg class="a" style="left:1522px;top:540px;" width="26" height="30" viewBox="0 0 20 24" fill="none"><path d="M3 1H12.5L18 6.5V21.5C18 22.3 17.3 23 16.5 23H3.5C2.7 23 2 22.3 2 21.5V2.5C2 1.7 2.7 1 3.5 1Z" fill="#fff" stroke="#8a8a8a" stroke-width="1"/><path d="M12.5 1V6.5H18" stroke="#8a8a8a" stroke-width="1"/><path d="M5 9H13M5 11.5H13" stroke="#c8c8c8" stroke-width=".8"/><rect x="0.5" y="14.5" width="19" height="4.2" rx="1" fill="#c43e1c"/><rect x="5" y="13" width="10" height="7.5" rx="1.2" fill="#fff" stroke="#c43e1c" stroke-width="1.2"/></svg>
<div class="t" style="left:1560.00px;top:535px;font-size:21px;line-height:21px;color:#242424;transform:scaleX(0.9444);transform-origin:0 0;">Roadmap.pdf</div>
<div class="t" style="left:1561.00px;top:563px;font-size:15px;line-height:15px;color:#616161;-webkit-text-stroke:0.6px #616161;transform:scaleX(0.9268);transform-origin:0 0;">73 KB</div>
<svg class="a" style="left:1864px;top:549px;" width="19" height="11" viewBox="0 0 19 11" fill="none"><path d="M1 1L9.5 10L18 1" stroke="#616161" stroke-width="1.7" stroke-linejoin="round" stroke-linecap="round"/></svg>
<div class="t" style="left:1108.00px;top:624px;font-size:19px;line-height:19px;color:#616161;transform:scaleX(0.9150);transform-origin:0 0;">2 attachments (160 KB)</div>
<svg class="a" style="left:1309px;top:626px;" width="22" height="14" viewBox="0 0 22 14" fill="none"><path d="M6 12.8H17.5C19.4 12.8 21 11.3 21 9.4C21 7.5 19.4 6 17.5 6C17 3.2 14.6 1.2 11.6 1.2C9 1.2 6.8 2.8 6 5.2C3.3 5.2 1 6.9 1 9C1 11.1 3.3 12.8 6 12.8Z" stroke="#616161" stroke-width="1.4"/></svg>
<div class="t" style="left:1341.00px;top:624px;font-size:19px;line-height:19px;color:#616161;transform:scaleX(0.9333);transform-origin:0 0;">Save all to OneDrive - yasoondemo</div>
<svg class="a" style="left:1642px;top:622px;" width="16" height="20" viewBox="0 0 16 20" fill="none"><path d="M8 1.5V15M2.5 9.5L8 15L13.5 9.5M1.5 18.8H14.5" stroke="#616161" stroke-width="1.5" stroke-linecap="round" stroke-linejoin="round"/></svg>
<div class="t" style="left:1672.00px;top:624px;font-size:19px;line-height:19px;color:#616161;transform:scaleX(0.9450);transform-origin:0 0;">Download all</div>
<div class="t" style="left:1101.00px;top:689px;font-size:21px;line-height:21px;color:#242424;transform:scaleX(0.9701);transform-origin:0 0;">Hi Lee,</div>
<div class="t" style="left:1101.00px;top:743px;font-size:21px;line-height:21px;color:#242424;transform:scaleX(1.0135);transform-origin:0 0;">Due to the latest customer research and trends on the market we'll need to rework our current checkout service.</div>
<div class="t" style="left:1101.00px;top:770px;font-size:21px;line-height:21px;color:#242424;transform:scaleX(1.0072);transform-origin:0 0;">See attached files for more details on the CI guidelines we need to stick to.</div>
<div class="t" style="left:1101.00px;top:824px;font-size:21px;line-height:21px;color:#242424;transform:scaleX(1.0166);transform-origin:0 0;">More importantly, we should have the timeline in mind as stated in the roadmap (see attachment).</div>
<div class="t" style="left:1101.00px;top:878px;font-size:21px;line-height:21px;color:#242424;transform:scaleX(0.9956);transform-origin:0 0;">Let me know whenever you need my assistance.</div>
<div class="t" style="left:1101.00px;top:932px;font-size:21px;line-height:21px;color:#242424;transform:scaleX(0.9752);transform-origin:0 0;">Thanks, Lee!</div>
<div class="t" style="left:1101.00px;top:986px;font-size:21px;line-height:21px;color:#242424;transform:scaleX(0.9760);transform-origin:0 0;">Best regards,</div>
<div class="t" style="left:1101.00px;top:1013px;font-size:21px;line-height:21px;color:#242424;transform:scaleX(0.9655);transform-origin:0 0;">Grady</div>
<div class="a" style="left:1101px;top:1091px;width:234px;height:36px;border:1.5px solid #2f65b5;border-radius:6px;box-sizing:border-box"></div>
<div class="t" style="left:1121.00px;top:1098px;font-size:19px;line-height:19px;color:#2f65b5;transform:scaleX(0.9245);transform-origin:0 0;">Thanks. I will take a look.</div>
<div class="a" style="left:1341px;top:1091px;width:98px;height:36px;border:1.5px solid #2f65b5;border-radius:6px;box-sizing:border-box"></div>
<div class="t" style="left:1360.00px;top:1098px;font-size:19px;line-height:19px;color:#2f65b5;transform:scaleX(0.9677);transform-origin:0 0;">Will do.</div>
<div class="a" style="left:1445px;top:1091px;width:131px;height:36px;border:1.5px solid #2f65b5;border-radius:6px;box-sizing:border-box"></div>
<div class="t" style="left:1464.00px;top:1098px;font-size:19px;line-height:19px;color:#2f65b5;transform:scaleX(0.8774);transform-origin:0 0;">Yes, I agree.</div>
<svg class="a" style="left:1595px;top:1101px;" width="22" height="21" viewBox="0 0 22 21" fill="none"><circle cx="6" cy="10.5" r="3.2" stroke="#2f65b5" stroke-width="1.4"/><path d="M1.5 19.8C1.5 16.8 3.5 15 6 15S10.5 16.8 10.5 19.8" stroke="#2f65b5" stroke-width="1.4"/><path d="M11 1.5H20.5V8.5H16L13.5 11V8.5H11Z" stroke="#2f65b5" stroke-width="1.4" stroke-linejoin="round"/></svg>
<div class="t" style="left:1622.00px;top:1100px;font-size:19px;line-height:19px;color:#2f65b5;transform:scaleX(0.8810);transform-origin:0 0;">Feedback</div>
<div class="a" style="left:1101px;top:1157px;width:128px;height:48px;border:1px solid #d1d1d1;border-radius:6px;box-sizing:border-box"></div>
<svg class="a" style="left:1121px;top:1170px;" width="28" height="21" viewBox="0 0 28 21" fill="none"><path d="M8.5 1.5L1.8 8.2L8.5 14.9" stroke="#8b38a8" stroke-width="1.7" stroke-linecap="round" stroke-linejoin="round"/><path d="M2.3 8.2H14.5C20.3 8.2 25 12.7 25 18.5V20.5" stroke="#8b38a8" stroke-width="1.7" stroke-linecap="round"/></svg>
<div class="t" style="left:1160.00px;top:1172px;font-size:21px;line-height:21px;color:#242424;transform:scaleX(0.9074);transform-origin:0 0;">Reply</div>
<div class="a" style="left:1235px;top:1157px;width:152px;height:48px;border:1px solid #d1d1d1;border-radius:6px;box-sizing:border-box"></div>
<svg class="a" style="left:1255px;top:1170px;" width="28" height="21" viewBox="0 0 28 21" fill="none"><path d="M19.5 1.5L26.2 8.2L19.5 14.9" stroke="#2f78d0" stroke-width="1.7" stroke-linecap="round" stroke-linejoin="round"/><path d="M25.7 8.2H13.5C7.7 8.2 3 12.7 3 18.5V20.5" stroke="#2f78d0" stroke-width="1.7" stroke-linecap="round"/></svg>
<div class="t" style="left:1293.00px;top:1172px;font-size:21px;line-height:21px;color:#242424;transform:scaleX(0.9610);transform-origin:0 0;">Forward</div>
<svg class="a" style="left:2295px;top:361px;" width="11" height="7" viewBox="0 0 11 7" fill="none"><path d="M0.5 6.5L5.5 1L10.5 6.5Z" fill="#858585"/></svg>
<div class="a" style="left:2296px;top:382px;width:9px;height:1117px;background:#858585;border-radius:5px"></div>
<svg class="a" style="left:2295px;top:1518px;" width="11" height="7" viewBox="0 0 11 7" fill="none"><path d="M0.5 0.5L5.5 6L10.5 0.5Z" fill="#858585"/></svg>
<div class="a" style="left:73px;top:233px;width:512px;height:566px;background:#fff;border-radius:9px;box-shadow:0 48px 96px rgba(0,0,0,.24),0 0 12px rgba(0,0,0,.20)"></div>
<div class="a" style="left:100px;top:258px;width:459px;height:48px;border:1px solid #d1d1d1;border-bottom:2px solid #2f65b5;border-radius:5px;box-sizing:border-box"></div>
<svg class="a" style="left:118px;top:272px;" width="25" height="24" viewBox="0 0 25 24" fill="none"><circle cx="10" cy="10" r="7.8" stroke="#242424" stroke-width="1.6"/><path d="M15.6 15.6L22.5 22.5" stroke="#242424" stroke-width="1.7" stroke-linecap="round"/></svg>
<div class="t" style="left:153.00px;top:273px;font-size:21px;line-height:21px;color:#707070;transform:scaleX(0.9640);transform-origin:0 0;">Find an app</div>
<div class="a" style="left:138px;top:349px;width:74px;height:74px;border:1px solid #e0e0e0;border-radius:9px;box-sizing:border-box;background:#fff"></div>
<svg class="a" style="left:153px;top:366px;" width="44" height="40" viewBox="0 0 44 40" fill="none"><rect x="12" y="0" width="31" height="40" rx="2.5" fill="#5fc5d3"/><rect x="12" y="10" width="31" height="10" fill="#8de8ec"/><rect x="12" y="20" width="31" height="10" fill="#5cc0cf"/><rect x="12" y="30" width="31" height="10" rx="2.5" fill="#5cc0cf"/><rect x="1" y="9.5" width="26" height="22" rx="2.5" fill="#000" opacity=".22" transform="translate(1.3 1.3)"/><rect x="0" y="9" width="26" height="22" rx="2.5" fill="#2b6d91"/><text x="13" y="26.5" text-anchor="middle" font-family="Liberation Sans" font-weight="bold" font-size="16" fill="#fff">B</text></svg>
<div class="t" style="left:139.00px;top:431px;font-size:18px;line-height:18px;color:#424242;transform:scaleX(0.9730);transform-origin:0 0;">Bookings</div>
<div class="a" style="left:288px;top:349px;width:74px;height:74px;border:1px solid #e0e0e0;border-radius:9px;box-sizing:border-box;background:#fff"></div>
<svg class="a" style="left:303px;top:366px;" width="44" height="40" viewBox="0 0 44 40" fill="none"><rect x="12" y="0" width="31" height="40" rx="2.5" fill="#5fbf85"/><rect x="12" y="10" width="31" height="10" fill="#44a268"/><rect x="12" y="20" width="31" height="10" fill="#2f8251"/><rect x="12" y="30" width="31" height="10" rx="2.5" fill="#225f3b"/><rect x="1" y="9.5" width="26" height="22" rx="2.5" fill="#000" opacity=".22" transform="translate(1.3 1.3)"/><rect x="0" y="9" width="26" height="22" rx="2.5" fill="#2d7a45"/><text x="13" y="26.5" text-anchor="middle" font-family="Liberation Sans" font-weight="bold" font-size="16" fill="#fff">X</text></svg>
<div class="t" style="left:281.00px;top:431px;font-size:18px;line-height:18px;color:#424242;transform:scaleX(0.9462);transform-origin:0 0;">Go to Excel</div>
<div class="a" style="left:438px;top:349px;width:74px;height:74px;border:1px solid #e0e0e0;border-radius:9px;box-sizing:border-box;background:#fff"></div>
<svg class="a" style="left:453px;top:366px;" width="44" height="40" viewBox="0 0 44 40" fill="none"><rect x="12" y="0" width="31" height="40" rx="2.5" fill="#c07ae6"/><rect x="12" y="10" width="31" height="10" fill="#a85ad6"/><rect x="12" y="20" width="31" height="10" fill="#8f40c4"/><rect x="12" y="30" width="31" height="10" rx="2.5" fill="#7126ad"/><rect x="1" y="9.5" width="26" height="22" rx="2.5" fill="#000" opacity=".22" transform="translate(1.3 1.3)"/><rect x="0" y="9" width="26" height="22" rx="2.5" fill="#6c22a9"/><text x="13" y="26.5" text-anchor="middle" font-family="Liberation Sans" font-weight="bold" font-size="16" fill="#fff">N</text></svg>
<div class="t" style="left:414.00px;top:431px;font-size:18px;line-height:18px;color:#424242;transform:scaleX(1.0000);transform-origin:0 0;">Go to OneNote</div>
<div class="a" style="left:138px;top:514px;width:74px;height:74px;border:1px solid #e0e0e0;border-radius:9px;box-sizing:border-box;background:#fff"></div>
<svg class="a" style="left:153px;top:531px;" width="44" height="40" viewBox="0 0 44 40" fill="none"><path d="M23 0A20 20 0 0 1 43 20H23Z" fill="#f2a07f"/><path d="M43 20A20 20 0 0 1 23 40A20 20 0 0 1 3 20H23Z" fill="#d35c3a"/><path d="M23 0V20H3A20 20 0 0 1 23 0Z" fill="#e0734f"/><rect x="1.3" y="10.8" width="26" height="22" rx="2.5" fill="#000" opacity=".22"/><rect x="0" y="9.5" width="26" height="22" rx="2.5" fill="#b7472a"/><text x="13" y="27" text-anchor="middle" font-family="Liberation Sans" font-weight="bold" font-size="16" fill="#fff">P</text></svg>
<div class="t" style="left:153.00px;top:596px;font-size:18px;line-height:18px;color:#424242;transform:scaleX(1.0000);transform-origin:0 0;">Go to</div>
<div class="t" style="left:131.00px;top:617px;font-size:18px;line-height:18px;color:#424242;transform:scaleX(0.9565);transform-origin:0 0;">PowerPoint</div>
<div class="a" style="left:288px;top:514px;width:74px;height:74px;border:1px solid #e0e0e0;border-radius:9px;box-sizing:border-box;background:#fff"></div>
<svg class="a" style="left:303px;top:531px;" width="44" height="40" viewBox="0 0 44 40" fill="none"><rect x="12" y="0" width="31" height="40" rx="2.5" fill="#5ba5ee"/><rect x="12" y="10" width="31" height="10" fill="#4286dd"/><rect x="12" y="20" width="31" height="10" fill="#2f66c4"/><rect x="12" y="30" width="31" height="10" rx="2.5" fill="#1f489f"/><rect x="1" y="9.5" width="26" height="22" rx="2.5" fill="#000" opacity=".22" transform="translate(1.3 1.3)"/><rect x="0" y="9" width="26" height="22" rx="2.5" fill="#2a5cb9"/><text x="13" y="26.5" text-anchor="middle" font-family="Liberation Sans" font-weight="bold" font-size="16" fill="#fff">W</text></svg>
<div class="t" style="left:279.00px;top:596px;font-size:18px;line-height:18px;color:#424242;transform:scaleX(1.0000);transform-origin:0 0;">Go to Word</div>
<div class="a" style="left:438px;top:514px;width:74px;height:74px;border:1px solid #e0e0e0;border-radius:9px;box-sizing:border-box;background:#fff"></div>
<svg class="a" style="left:453px;top:531px;" width="44" height="40" viewBox="0 0 44 40" fill="none"><defs><linearGradient id="v1" x1="0" y1="0" x2="0" y2="1"><stop offset="0" stop-color="#3a86e0"/><stop offset="1" stop-color="#17479a"/></linearGradient><linearGradient id="v2" x1="0" y1="0" x2="0" y2="1"><stop offset="0" stop-color="#86cdf7"/><stop offset="1" stop-color="#3f8fe0"/></linearGradient><radialGradient id="v3" cx=".5" cy=".4"><stop offset="0" stop-color="#c6e8fc"/><stop offset="1" stop-color="#6db4ec"/></radialGradient></defs><path d="M12 1A11 11 0 0 0 1 12V28A11 11 0 0 0 12 39A11 11 0 0 0 23 28A11 11 0 0 0 14 17.2A11 11 0 0 0 23 12A11 11 0 0 0 12 1Z" fill="url(#v1)"/><path d="M32 1A11 11 0 0 1 43 12V28A11 11 0 0 1 32 39A11 11 0 0 1 21 28A11 11 0 0 1 30 17.2A11 11 0 0 1 21 12A11 11 0 0 1 32 1Z" fill="url(#v2)"/><circle cx="22" cy="15" r="9" fill="url(#v3)"/><path d="M12 28A10 10 0 0 0 22 38" stroke="#1a4c98" stroke-width="0" /></svg>
<div class="t" style="left:427.00px;top:596px;font-size:18px;line-height:18px;color:#424242;transform:scaleX(0.9412);transform-origin:0 0;">Viva Engage</div>
<div class="a" style="left:100px;top:701px;width:459px;height:1px;background:#e0e0e0"></div>
<div class="a" style="left:400px;top:725px;width:159px;height:50px;background:#f5f5f5;border:1px solid #d1d1d1;border-radius:6px;box-sizing:border-box"></div>
<div class="t" style="left:417.00px;top:744px;font-size:21px;line-height:21px;color:#242424;-webkit-text-stroke:0.6px #242424;transform:scaleX(1.0000);transform-origin:0 0;">Add apps</div>
<svg class="a" style="left:516px;top:740px;" width="23" height="23" viewBox="0 0 23 23" fill="none"><rect x="1.6" y="1.6" width="19.8" height="19.8" rx="4.5" stroke="#242424" stroke-width="2.8"/><path d="M11.5 5.8V15.6M6.4 10.7H16.6" stroke="#242424" stroke-width="2.4"/></svg>
<div class="a" style="left:1px;top:474px;width:90px;height:87px;border:7px solid rgba(0,133,87,.5);box-sizing:border-box"></div>
<div class="a" style="left:1px;top:474px;width:9px;height:87px;border:7px solid #00855a;border-right:none;box-sizing:border-box"></div>
<div class="a" style="left:378px;top:707px;width:195px;height:89px;border:6px solid rgba(0,133,87,.5);box-sizing:border-box"></div>
</body></html>
